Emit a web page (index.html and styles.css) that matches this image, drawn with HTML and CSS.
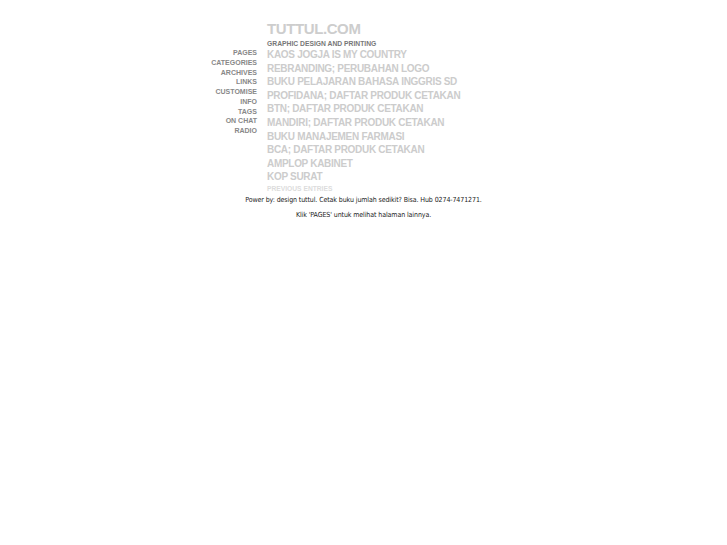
FILE: index.html
```html
<!DOCTYPE html>
<html>
<head>
<meta charset="utf-8">
<title>TUTTUL.COM</title>
<link rel="stylesheet" href="styles.css">
</head>
<body>
<div class="wrap">
  <div class="layout">
    <div class="spacer"></div>
    <header class="head">
      <h1 class="title">TUTTUL.COM</h1>
      <div class="tagline">GRAPHIC DESIGN AND PRINTING</div>
    </header>
    <nav class="menu">
      <a href="#">PAGES</a>
      <a href="#">CATEGORIES</a>
      <a href="#">ARCHIVES</a>
      <a href="#">LINKS</a>
      <a href="#">CUSTOMISE</a>
      <a href="#">INFO</a>
      <a href="#">TAGS</a>
      <a href="#">ON CHAT</a>
      <a href="#">RADIO</a>
    </nav>
    <main class="posts">
      <a href="#">KAOS JOGJA IS MY COUNTRY</a>
      <a href="#">REBRANDING; PERUBAHAN LOGO</a>
      <a href="#">BUKU PELAJARAN BAHASA INGGRIS SD</a>
      <a href="#">PROFIDANA; DAFTAR PRODUK CETAKAN</a>
      <a href="#">BTN; DAFTAR PRODUK CETAKAN</a>
      <a href="#">MANDIRI; DAFTAR PRODUK CETAKAN</a>
      <a href="#">BUKU MANAJEMEN FARMASI</a>
      <a href="#">BCA; DAFTAR PRODUK CETAKAN</a>
      <a href="#">AMPLOP KABINET</a>
      <a href="#">KOP SURAT</a>
      <a href="#" class="prev">PREVIOUS ENTRIES</a>
    </main>
  </div>
  <footer class="foot">
    <p class="foot-line">Power by: design tuttul. Cetak buku jumlah sedikit? Bisa. Hub 0274-7471271.</p>
    <p class="foot-line">Klik 'PAGES' untuk melihat halaman lainnya.</p>
  </footer>
</div>
</body>
</html>
```

FILE: styles.css
```css
html, body {
  margin: 0;
  padding: 0;
  background: #fff;
}
body {
  padding: 19px 8px 8px;
  font-family: "Liberation Sans", Arial, sans-serif;
}
a {
  text-decoration: none;
}
.layout {
  width: 333px;
  margin: 0 auto;
  display: grid;
  grid-template-columns: 60px 1fr;
  column-gap: 10px;
}
.title {
  margin: 0;
  padding-top: 1px;
  font-size: 15px;
  line-height: 18px;
  font-weight: bold;
  letter-spacing: -0.4px;
  color: #cdcdcd;
}
.tagline {
  margin-top: 1px;
  font-size: 6.75px;
  line-height: 9px;
  font-weight: bold;
  color: #777;
}
.menu {
  display: flex;
  flex-direction: column;
  align-items: flex-end;
  text-align: right;
}
.menu a {
  font-size: 7px;
  line-height: 9.75px;
  font-weight: bold;
  color: #888;
  white-space: nowrap;
}
.posts {
  display: flex;
  flex-direction: column;
  align-items: flex-start;
}
.posts a {
  font-size: 10px;
  line-height: 13.6px;
  font-weight: bold;
  letter-spacing: -0.3px;
  color: #cccccc;
  white-space: nowrap;
}
.posts a.prev {
  font-size: 6.7px;
  line-height: 9px;
  letter-spacing: 0;
  color: #dcdcdc;
}
.foot {
  text-align: center;
  font-family: "DejaVu Sans Condensed", "DejaVu Sans", Verdana, sans-serif;
  font-size: 7px;
  letter-spacing: -0.1px;
  color: #222;
}
.foot-line {
  margin: 0;
  line-height: 15px;
}
```
